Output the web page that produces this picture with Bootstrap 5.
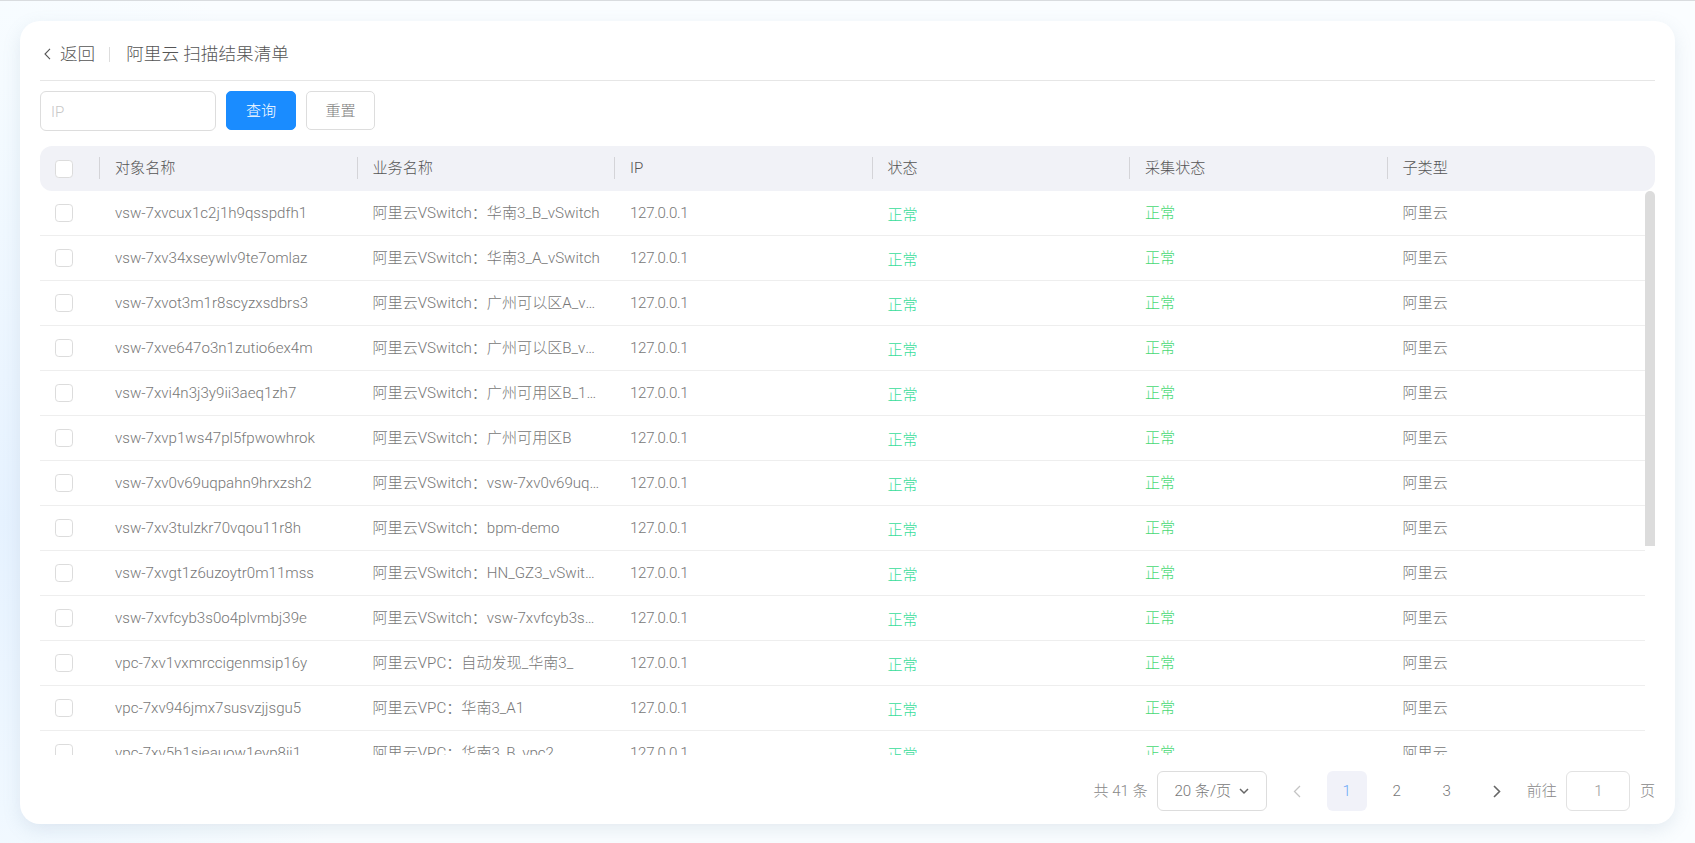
<!DOCTYPE html>
<html lang="zh-CN">
<head>
<meta charset="utf-8">
<title>阿里云 扫描结果清单</title>
<link href="https://cdn.jsdelivr.net/npm/bootstrap@5.3.0/dist/css/bootstrap.min.css" rel="stylesheet">
<style>
html,body{height:100%;overflow:hidden}
body{font-family:Roboto,"Noto Sans CJK SC",sans-serif;font-weight:300;font-size:15.1px;color:#666;border-top:1px solid #d9dcdf;
  background:radial-gradient(ellipse 380px 620px at 0 520px,#e6f2ff 0,#f5fbff 70%,#fafdff 100%),#f8fbff}
.page-wrap{height:100%;padding:20px 20px 19px}
.panel{height:100%;background:#fff;border-radius:20px;box-shadow:0 6px 18px rgba(120,140,170,.16);padding:0 20px 13px}
.title-bar{height:60px;padding-top:8px;border-bottom:1px solid #e6e6e6;font-size:17.6px;color:#555}
.back-link{color:#555;text-decoration:none}
.back-link svg{margin:0 9px 0 4px}
.title-sep{width:1px;height:15px;background:#ddd;margin:0 16px 0 14px}
.tool-bar{margin-top:10px;height:40px;margin-bottom:15px}
.ip-input{width:176px;height:40px;border:1px solid #ddd;border-radius:6px;font-size:15.1px;padding:2px 10px 0;font-weight:300;box-shadow:none}
.ip-input::placeholder{color:#c8c8c8}
.btn-query{width:70px;height:39px;margin-left:10px;background:#1a8cff;border-color:#1a8cff;border-radius:5px;font-size:15.1px;font-weight:300;padding:2px 0 0}
.btn-reset{width:69px;height:39px;margin-left:10px;background:#fff;border:1px solid #ddd;border-radius:5px;color:#808080;font-size:15.1px;font-weight:300;padding:2px 0 0}
.grid-wrap{flex:1 1 0;min-height:0}
.head-table,.body-table{table-layout:fixed;margin:0;color:#666;--bs-table-bg:transparent}
.head-table{width:1614px}
.body-table{width:1605px}
.col-check{width:59px}
.col-data{width:257.5px}
.head-box{height:45px;background:#f1f2f7;border-radius:12px}
.head-table th{height:45px;padding:0 0 0 16px;font-weight:300;border:0;position:relative;color:#555;vertical-align:middle}
.head-table th+th::before{content:"";position:absolute;left:0;top:11px;height:22px;width:1px;background:#d4d4d8}
.body-box{height:calc(100% - 45px);overflow:hidden;position:relative}
.body-table td{height:45px;padding:2px 14px 0 16px;border-bottom:1px solid #eee;vertical-align:middle;white-space:nowrap;overflow:hidden;text-overflow:ellipsis;color:#777}
.body-table tr:first-child td{height:44px}
.body-table td.check-cell,.head-table th.check-cell{padding:0 0 0 15px}
.tick{width:18px;height:18px;margin:0;display:block;border:1px solid #dcdcdc;border-radius:3px;background-color:#fff}
.ip-cell{letter-spacing:-.3px}
.state-a{color:#38dd9b!important;padding-top:6px!important}
.state-b{color:#47d974!important}
.fake-thumb{position:absolute;top:0;left:1605px;width:10px;height:355px;background:#dcdcdc;border-radius:6px 6px 0 0}
.pager-bar{margin-top:16px;height:40px;color:#888}
.size-select{width:110px;height:40px;margin-left:9px;border:1px solid #ddd;border-radius:6px;color:#777;font-weight:300;font-size:15.1px;padding:0;box-shadow:none}
.size-select svg{margin-left:8px}
.pager-list{margin:0 0 0 10px;gap:10px}
.pager-list .page-item .page-link{width:40px;height:40px;padding:0;display:flex;align-items:center;justify-content:center;border:0;border-radius:6px;background:transparent;color:#777;font-size:15.1px;margin:0}
.pager-list .page-item.active .page-link{background:#f1f2f9;color:#6ea9f7}
.jump-input{width:64px;height:40px;margin:0 9.5px;border:1px solid #e2e2e2;border-radius:6px;text-align:center;color:#999;font-weight:300;font-size:15.1px;padding:0;box-shadow:none}
.jump-label{margin-left:10px}
</style>
</head>
<body>
<div class="page-wrap">
<main class="panel d-flex flex-column">
  <div class="title-bar d-flex align-items-center">
    <a class="back-link d-flex align-items-center" href="#"><svg width="7" height="12" viewBox="0 0 7 12" fill="none" stroke="#555" stroke-width="1.1"><path d="M6 .8 1 6l5 5.2"/></svg>返回</a>
    <span class="title-sep"></span>
    <span>阿里云 扫描结果清单</span>
  </div>
  <div class="tool-bar d-flex align-items-start">
    <input class="form-control ip-input" placeholder="IP">
    <button class="btn btn-primary btn-query" type="button">查询</button>
    <button class="btn btn-reset" type="button">重置</button>
  </div>
  <div class="grid-wrap">
    <div class="head-box">
      <table class="table head-table">
        <colgroup><col class="col-check"><col class="col-data"><col class="col-data"><col class="col-data"><col class="col-data"><col class="col-data"><col></colgroup>
        <thead><tr><th class="check-cell"><input class="form-check-input tick" type="checkbox"></th><th>对象名称</th><th>业务名称</th><th>IP</th><th>状态</th><th>采集状态</th><th>子类型</th></tr></thead>
      </table>
    </div>
    <div class="body-box">
      <table class="table body-table">
        <colgroup><col class="col-check"><col class="col-data"><col class="col-data"><col class="col-data"><col class="col-data"><col class="col-data"><col></colgroup>
        <tbody>
<tr><td class="check-cell"><input class="form-check-input tick" type="checkbox"></td><td>vsw-7xvcux1c2j1h9qsspdfh1</td><td>阿里云VSwitch：华南3_B_vSwitch</td><td class="ip-cell">127.0.0.1</td><td class="state-a">正常</td><td class="state-b">正常</td><td>阿里云</td></tr>
<tr><td class="check-cell"><input class="form-check-input tick" type="checkbox"></td><td>vsw-7xv34xseywlv9te7omlaz</td><td>阿里云VSwitch：华南3_A_vSwitch</td><td class="ip-cell">127.0.0.1</td><td class="state-a">正常</td><td class="state-b">正常</td><td>阿里云</td></tr>
<tr><td class="check-cell"><input class="form-check-input tick" type="checkbox"></td><td>vsw-7xvot3m1r8scyzxsdbrs3</td><td>阿里云VSwitch：广州可以区A_vSwitch</td><td class="ip-cell">127.0.0.1</td><td class="state-a">正常</td><td class="state-b">正常</td><td>阿里云</td></tr>
<tr><td class="check-cell"><input class="form-check-input tick" type="checkbox"></td><td>vsw-7xve647o3n1zutio6ex4m</td><td>阿里云VSwitch：广州可以区B_vSwitch</td><td class="ip-cell">127.0.0.1</td><td class="state-a">正常</td><td class="state-b">正常</td><td>阿里云</td></tr>
<tr><td class="check-cell"><input class="form-check-input tick" type="checkbox"></td><td>vsw-7xvi4n3j3y9ii3aeq1zh7</td><td>阿里云VSwitch：广州可用区B_1_vSwitch</td><td class="ip-cell">127.0.0.1</td><td class="state-a">正常</td><td class="state-b">正常</td><td>阿里云</td></tr>
<tr><td class="check-cell"><input class="form-check-input tick" type="checkbox"></td><td>vsw-7xvp1ws47pl5fpwowhrok</td><td>阿里云VSwitch：广州可用区B</td><td class="ip-cell">127.0.0.1</td><td class="state-a">正常</td><td class="state-b">正常</td><td>阿里云</td></tr>
<tr><td class="check-cell"><input class="form-check-input tick" type="checkbox"></td><td>vsw-7xv0v69uqpahn9hrxzsh2</td><td>阿里云VSwitch：vsw-7xv0v69uqpahn9hrxzsh2</td><td class="ip-cell">127.0.0.1</td><td class="state-a">正常</td><td class="state-b">正常</td><td>阿里云</td></tr>
<tr><td class="check-cell"><input class="form-check-input tick" type="checkbox"></td><td>vsw-7xv3tulzkr70vqou11r8h</td><td>阿里云VSwitch：bpm-demo</td><td class="ip-cell">127.0.0.1</td><td class="state-a">正常</td><td class="state-b">正常</td><td>阿里云</td></tr>
<tr><td class="check-cell"><input class="form-check-input tick" type="checkbox"></td><td>vsw-7xvgt1z6uzoytr0m11mss</td><td>阿里云VSwitch：HN_GZ3_vSwitch</td><td class="ip-cell">127.0.0.1</td><td class="state-a">正常</td><td class="state-b">正常</td><td>阿里云</td></tr>
<tr><td class="check-cell"><input class="form-check-input tick" type="checkbox"></td><td>vsw-7xvfcyb3s0o4plvmbj39e</td><td>阿里云VSwitch：vsw-7xvfcyb3s0o4plvmbj39e</td><td class="ip-cell">127.0.0.1</td><td class="state-a">正常</td><td class="state-b">正常</td><td>阿里云</td></tr>
<tr><td class="check-cell"><input class="form-check-input tick" type="checkbox"></td><td>vpc-7xv1vxmrccigenmsip16y</td><td>阿里云VPC：自动发现_华南3_</td><td class="ip-cell">127.0.0.1</td><td class="state-a">正常</td><td class="state-b">正常</td><td>阿里云</td></tr>
<tr><td class="check-cell"><input class="form-check-input tick" type="checkbox"></td><td>vpc-7xv946jmx7susvzjjsgu5</td><td>阿里云VPC：华南3_A1</td><td class="ip-cell">127.0.0.1</td><td class="state-a">正常</td><td class="state-b">正常</td><td>阿里云</td></tr>
<tr><td class="check-cell"><input class="form-check-input tick" type="checkbox"></td><td>vpc-7xv5h1sjeauow1eyp8ij1</td><td>阿里云VPC：华南3_B_vpc2</td><td class="ip-cell">127.0.0.1</td><td class="state-a">正常</td><td class="state-b">正常</td><td>阿里云</td></tr>
        </tbody>
      </table>
      <div class="fake-thumb"></div>
    </div>
  </div>
  <div class="pager-bar d-flex align-items-center justify-content-end">
    <span>共 41 条</span>
    <button class="btn size-select d-flex align-items-center justify-content-center" type="button">20 条/页<svg width="10" height="7" viewBox="0 0 10 7" fill="none" stroke="#666" stroke-width="1.5"><path d="M1 1l4 4 4-4"/></svg></button>
    <ul class="pagination pager-list">
      <li class="page-item"><a class="page-link" href="#"><svg width="8" height="13" viewBox="0 0 8 13" fill="none" stroke="#c4c4c4" stroke-width="1.3"><path d="M7 1 1.5 6.5 7 12"/></svg></a></li>
      <li class="page-item active"><a class="page-link" href="#">1</a></li>
      <li class="page-item"><a class="page-link" href="#">2</a></li>
      <li class="page-item"><a class="page-link" href="#">3</a></li>
      <li class="page-item"><a class="page-link" href="#"><svg width="8" height="13" viewBox="0 0 8 13" fill="none" stroke="#666" stroke-width="1.6"><path d="M1 1l5.5 5.5L1 12"/></svg></a></li>
    </ul>
    <span class="jump-label">前往</span>
    <input class="form-control jump-input" value="1">
    <span>页</span>
  </div>
</main>
</div>
<script src="https://cdn.jsdelivr.net/npm/bootstrap@5.3.0/dist/js/bootstrap.bundle.min.js"></script>
</body>
</html>
